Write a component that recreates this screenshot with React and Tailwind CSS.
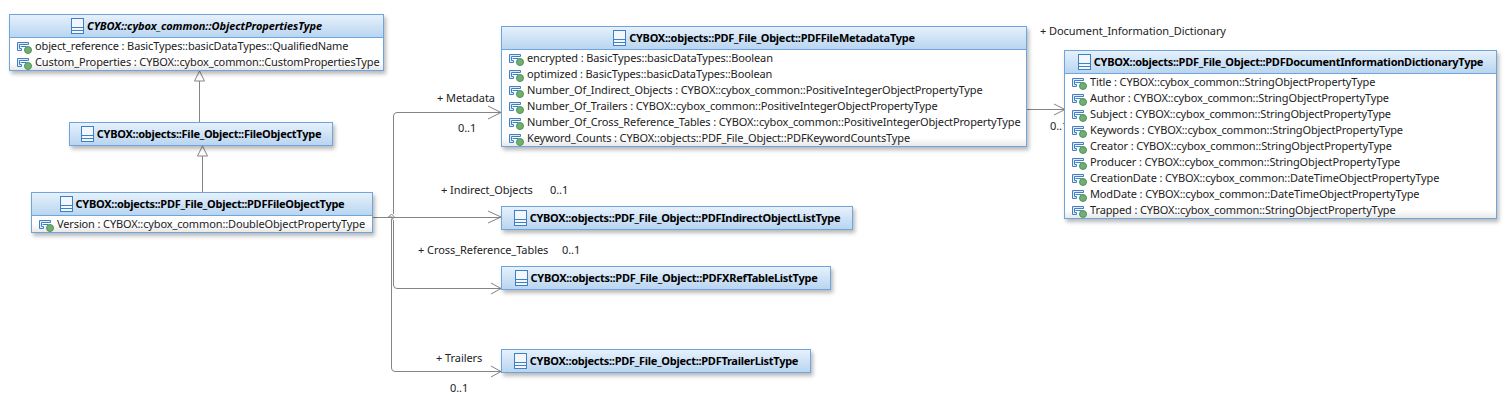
import React from 'react';

const AttrIcon = () => (
  <svg width="15" height="16" viewBox="0 0 15 16" className="shrink-0">
    <path d="M0.5 4.5h11v2h-9v4h2v2h-4z" fill="#dfeafa" stroke="#3f7fc4" strokeWidth="1" />
    <path d="M3.5 8.5h6" fill="none" stroke="#3f7fc4" strokeWidth="1" />
    <circle cx="11" cy="12" r="3.5" fill="#72ad72" stroke="#4c9560" strokeWidth="1" />
  </svg>
);

const ClassIcon = () => (
  <svg width="13" height="16" viewBox="0 0 13 16" className="shrink-0">
    <rect x="0.5" y="0.5" width="12" height="15" fill="#f2f7fd" stroke="#3f7fc4" />
    <path d="M0.5 9.5h12M0.5 12.5h12" stroke="#3f7fc4" />
  </svg>
);

const ClassBox = ({ title, italic, attrs, className }) => (
  <div className={`absolute flex flex-col border border-[#6da5dc] bg-white shadow-[2px_3px_4px_rgba(0,0,0,0.28)] ${className}`}>
    <div className={`flex h-[22px] shrink-0 items-center justify-center gap-[3px] bg-gradient-to-b from-[#e6f1fc] to-[#b9d5f0] text-[11px] font-bold text-black ${italic ? 'italic tracking-[-0.07px]' : 'tracking-[-0.27px]'}`}>
      <ClassIcon />
      <span>{title}</span>
    </div>
    {attrs && (
      <div className="flex flex-col border-t border-[#6da5dc] bg-[linear-gradient(to_bottom,#fff_calc(100%-8px),#e8e8e8)]">
        {attrs.map((attr, i) => (
          <div key={i} className="flex h-[16px] items-center gap-[3px] pl-[7px] whitespace-nowrap text-[11px] tracking-[-0.13px] text-[#222]">
            <AttrIcon />
            <span>{attr}</span>
          </div>
        ))}
      </div>
    )}
  </div>
);

const Label = ({ children, className }) => (
  <span className={`absolute whitespace-nowrap text-[11px] leading-[14px] tracking-[-0.06px] text-[#222] ${className}`}>{children}</span>
);

const dictAttrs = [
  'Title : CYBOX::cybox_common::StringObjectPropertyType',
  'Author : CYBOX::cybox_common::StringObjectPropertyType',
  'Subject : CYBOX::cybox_common::StringObjectPropertyType',
  'Keywords : CYBOX::cybox_common::StringObjectPropertyType',
  'Creator : CYBOX::cybox_common::StringObjectPropertyType',
  'Producer : CYBOX::cybox_common::StringObjectPropertyType',
  'CreationDate : CYBOX::cybox_common::DateTimeObjectPropertyType',
  'ModDate : CYBOX::cybox_common::DateTimeObjectPropertyType',
  'Trapped : CYBOX::cybox_common::StringObjectPropertyType',
];

const metaAttrs = [
  'encrypted : BasicTypes::basicDataTypes::Boolean',
  'optimized : BasicTypes::basicDataTypes::Boolean',
  'Number_Of_Indirect_Objects : CYBOX::cybox_common::PositiveIntegerObjectPropertyType',
  'Number_Of_Trailers : CYBOX::cybox_common::PositiveIntegerObjectPropertyType',
  'Number_Of_Cross_Reference_Tables : CYBOX::cybox_common::PositiveIntegerObjectPropertyType',
  'Keyword_Counts : CYBOX::objects::PDF_File_Object::PDFKeywordCountsType',
];

// connectors sit behind the boxes
const Connectors = () => (
  <svg width="1506" height="417" className="absolute left-0 top-0" fill="none" stroke="#848484" strokeWidth="1">
    <path d="M199.5 122V81M194.5 81L199.5 71L204.5 81Z" />
    <path d="M202.5 192V156M197.5 156L202.5 146L207.5 156Z" />
    <path d="M372 217.5H501" />
    <path d="M488 211L501 217L488 223" />
    <path d="M392.5 217L388.5 217L391.5 214L394.5 217L391.5 220Z" />
    <path d="M393.5 214V116Q393.5 112.5 397 112.5H501" />
    <path d="M488 106L501 112.5L488 119" />
    <path d="M393.5 220V285Q393.5 288.5 397 288.5H501" />
    <path d="M491 283L501 288.5L491 294" />
    <path d="M391.5 220V368Q391.5 371.5 395 371.5H501" />
    <path d="M491 366L501 371.5L491 377" />
    <path d="M1026 109.5H1065" />
    <path d="M1054 104L1065 109.5L1054 115" />
  </svg>
);

export default function App() {
  return (
    <div className="relative h-[417px] w-[1506px] overflow-hidden bg-white font-['Noto_Sans',sans-serif]">
      <Connectors />

      <ClassBox
        className="left-[9px] top-[14px] w-[375px]"
        title="CYBOX::cybox_common::ObjectPropertiesType"
        italic
        attrs={[
          'object_reference : BasicTypes::basicDataTypes::QualifiedName',
          'Custom_Properties : CYBOX::cybox_common::CustomPropertiesType',
        ]}
      />
      <ClassBox className="left-[69px] top-[122px] w-[264px]" title="CYBOX::objects::File_Object::FileObjectType" />
      <ClassBox
        className="left-[31px] top-[192px] w-[342px]"
        title="CYBOX::objects::PDF_File_Object::PDFFileObjectType"
        attrs={['Version : CYBOX::cybox_common::DoubleObjectPropertyType']}
      />
      <ClassBox
        className="left-[501px] top-[26px] w-[526px]"
        title="CYBOX::objects::PDF_File_Object::PDFFileMetadataType"
        attrs={metaAttrs}
      />
      <ClassBox className="left-[501px] top-[206px] w-[352px]" title="CYBOX::objects::PDF_File_Object::PDFIndirectObjectListType" />
      <ClassBox className="left-[501px] top-[266px] w-[330px]" title="CYBOX::objects::PDF_File_Object::PDFXRefTableListType" />
      <ClassBox className="left-[501px] top-[349px] w-[310px]" title="CYBOX::objects::PDF_File_Object::PDFTrailerListType" />
      <Label className="left-[1050px] top-[119px]">0..1</Label>
      <ClassBox
        className="left-[1064px] top-[50px] w-[433px]"
        title="CYBOX::objects::PDF_File_Object::PDFDocumentInformationDictionaryType"
        attrs={dictAttrs}
      />

      <Label className="left-[437px] top-[91px]">+ Metadata</Label>
      <Label className="left-[458px] top-[121px]">0..1</Label>
      <Label className="left-[441px] top-[183px]">+ Indirect_Objects</Label>
      <Label className="left-[550px] top-[183px]">0..1</Label>
      <Label className="left-[418px] top-[243px]">+ Cross_Reference_Tables</Label>
      <Label className="left-[562px] top-[243px]">0..1</Label>
      <Label className="left-[436px] top-[351px]">+ Trailers</Label>
      <Label className="left-[450px] top-[381px]">0..1</Label>
      <Label className="left-[1040px] top-[24px]">+ Document_Information_Dictionary</Label>
    </div>
  );
}
